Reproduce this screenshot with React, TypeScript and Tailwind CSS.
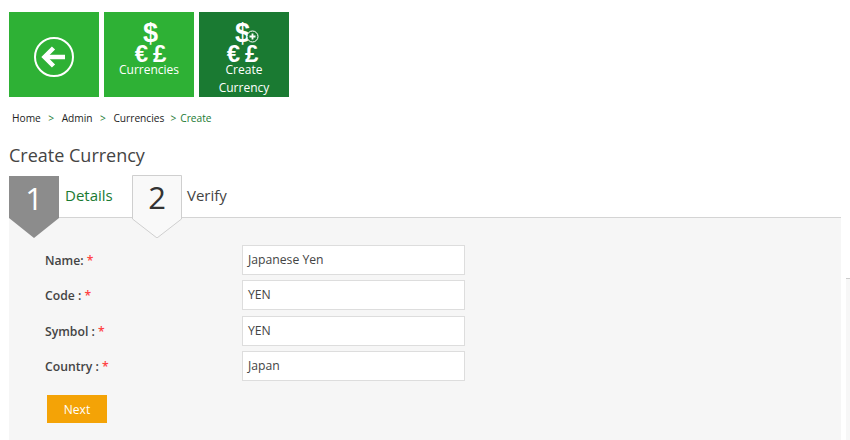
const font = "font-['Open_Sans','Noto_Sans',sans-serif]"

function CurrencyGlyphs({ plus, className }: { plus?: boolean, className?: string }) {
    return (
        <div className={`relative w-[33px] flex flex-col items-center font-['Liberation_Sans',sans-serif] font-bold text-white leading-none ${className ?? ''}`}>
            <span className="text-[27px] h-[24px] leading-[24px]">$</span>
            <span className="flex gap-[5px] text-[24px] h-[17px] leading-[17px]">
                <span>€</span>
                <span>£</span>
            </span>
            {plus && (
                <svg className="absolute left-[20px] top-[9px]" width="13" height="13" viewBox="0 0 13 13">
                    <circle cx="6.5" cy="6.5" r="5.5" fill="#1a7a32" stroke="#fff" strokeWidth="1" />
                    <path d="M6.5 3.5v6M3.5 6.5h6" stroke="#fff" strokeWidth="1.8" />
                </svg>
            )}
        </div>
    )
}

function Step({ num, active }: { num: number, active?: boolean }) {
    return (
        <div className={`relative z-10 w-[50px] h-[63px] shrink-0 flex justify-center pt-[1px] ${active ? 'text-white' : 'text-[#333]'}`}>
            <svg className="absolute left-0 top-0" width="50" height="63" viewBox="0 0 50 63">
                {active
                    ? <path d="M0 0H50V42L25 62L0 42Z" fill="#8c8c8c" />
                    : <path d="M.5 .5H49.5V44L25 63L.5 44Z" fill="#f9f9f9" stroke="#cfcfcf" />}
            </svg>
            <span className="relative text-[31px] leading-[42px]">{num}</span>
        </div>
    )
}

function Field({ label, value, className }: { label: string, value: string, className?: string }) {
    return (
        <div className={`flex items-center ${className ?? ''}`}>
            <label className="w-[197px] text-[12.2px] font-semibold text-[#444] pt-[3px]">
                {label} <span className="text-[#f44]">*</span>
            </label>
            <div className="w-[223px] h-[30px] bg-white border border-[#ddd] pl-[5px] flex items-center text-[12.2px] text-[#444]">
                {value}
            </div>
        </div>
    )
}

export default function App() {
    return (
        <div className={`${font} w-[850px] h-[440px] overflow-hidden bg-white pt-[12px] pl-[9px]`}>
            <div className="flex gap-[5px]">
                <div className="w-[90px] h-[85px] bg-[#2eb135] flex items-center justify-center pt-[5px]">
                    <svg width="40" height="40" viewBox="0 0 40 40" fill="none" stroke="#fff">
                        <circle cx="20" cy="20" r="19" strokeWidth="2" />
                        <path d="M31 20H12" strokeWidth="4.5" />
                        <path d="M19.5 11L10.5 20L19.5 29" strokeWidth="4.5" />
                    </svg>
                </div>
                <div className="w-[90px] h-[85px] bg-[#2eb135] flex flex-col items-center pt-[9px] text-white">
                    <CurrencyGlyphs className="ml-[3px]" />
                    <span className="text-[12px] leading-[18px] mt-[-1px]">Currencies</span>
                </div>
                <div className="w-[90px] h-[85px] bg-[#1a7a32] flex flex-col items-center pt-[9px] text-white text-center">
                    <CurrencyGlyphs plus className="mr-[3px]" />
                    <span className="text-[12px] leading-[18px] mt-[-1px]">Create Currency</span>
                </div>
            </div>

            <div className="flex items-center h-[18px] mt-[13px] pl-[3px] text-[10.2px] text-[#222]">
                <span>Home</span>
                <span className="mx-[7.5px] text-[#1a7a32]">&gt;</span>
                <span>Admin</span>
                <span className="mx-[7.5px] text-[#1a7a32]">&gt;</span>
                <span>Currencies</span>
                <span className="mx-[6px] text-[#1a7a32]">&gt;</span>
                <span className="ml-[-2px] text-[#1a7a32]">Create</span>
            </div>

            <h1 className="mt-[15px] h-[25px] text-[18px] leading-[25px] text-[#444]">Create Currency</h1>

            <div className="flex mt-[8px]">
                <div className="w-[832px] shrink-0">
                    <div className="h-[42px] flex border-b border-[#d4d4d4]">
                        <Step num={1} active />
                        <span className="ml-[6px] w-[67px] text-[15px] leading-[38px] text-[#1a7a32]">Details</span>
                        <div className="mt-[-1px]"><Step num={2} /></div>
                        <span className="ml-[5px] text-[15px] leading-[38px] text-[#444]">Verify</span>
                    </div>

                    <div className="h-[222px] bg-[#f6f6f6] pt-[27px] pl-[36px]">
                        <Field label="Name:" value="Japanese Yen" />
                        <Field label="Code :" value="YEN" className="mt-[5px]" />
                        <Field label="Symbol :" value="YEN" className="mt-[6px]" />
                        <Field label="Country :" value="Japan" className="mt-[5px]" />
                        <button className="block ml-[2px] mt-[14px] w-[60px] h-[28px] pt-[1px] bg-[#f4a306] text-white text-[12px]">Next</button>
                    </div>
                </div>
                <div className="ml-[5px] mt-[102px] w-[4px] h-[162px] bg-[#f7f7f7] border-t border-[#ccc]" />
            </div>
        </div>
    )
}
